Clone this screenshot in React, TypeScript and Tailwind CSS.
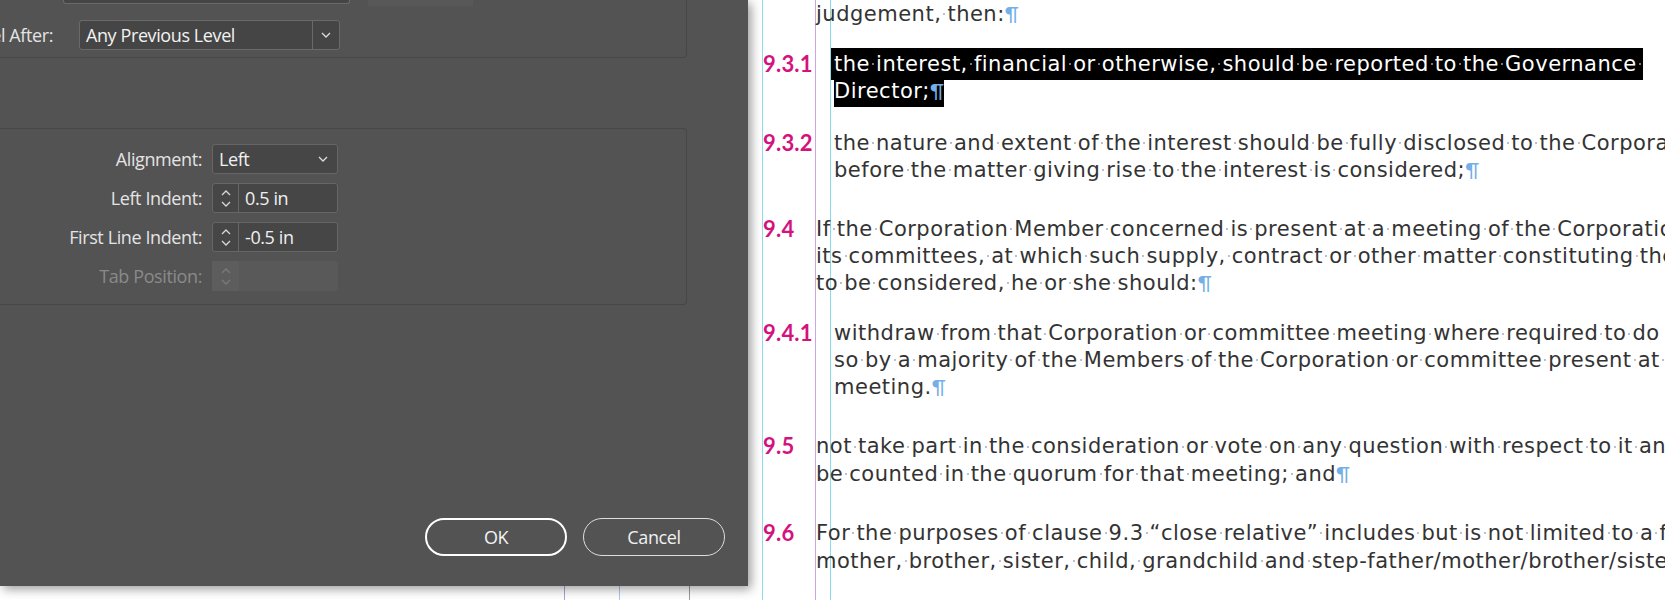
import React from "react";

function Chevron({ up = false, color = "#dcdcdc" }: { up?: boolean; color?: string }) {
  return (
    <svg width="10" height="6" viewBox="0 0 10 6" className="block">
      <polyline
        points={up ? "1,5 5,1 9,5" : "1,1 5,5 9,1"}
        fill="none"
        stroke={color}
        strokeWidth="1.3"
      />
    </svg>
  );
}

function Spinner({ value, disabled = false }: { value?: string; disabled?: boolean }) {
  const c = disabled ? "#7a7a7a" : "#d8d8d8";
  return (
    <div
      className={
        disabled
          ? "ml-[10px] flex h-[30px] w-[126px] rounded-[3px] bg-[#595959]"
          : "ml-[10px] flex h-[30px] w-[126px] rounded-[3px] border border-[#666666] bg-[#464646]"
      }
    >
      <div
        className={
          disabled
            ? "flex w-[27px] flex-col items-center justify-center gap-[5px] bg-[#5d5d5d]"
            : "flex w-[26px] flex-col items-center justify-center gap-[5px] border-r border-[#666666]"
        }
      >
        <Chevron up color={c} />
        <Chevron color={c} />
      </div>
      {value && <div className="flex items-center pl-[6px] text-[#f0f0f0]">{value}</div>}
    </div>
  );
}

// InDesign shows spaces as small dots
function Dot({ light = false }: { light?: boolean }) {
  return (
    <span className="inline-block h-[2px] w-[0.29em] align-[0.27em]">
      <span
        className={
          light
            ? "mx-auto block size-[2px] rounded-full bg-[#a0a0a0]"
            : "mx-auto block size-[2px] rounded-full bg-[#a3abc6]"
        }
      />
    </span>
  );
}

function Words({ text, light = false }: { text: string; light?: boolean }) {
  const parts = text.split(" ");
  return (
    <>
      {parts.map((w, i) => (
        <React.Fragment key={i}>
          {i > 0 && <Dot light={light} />}
          {w}
        </React.Fragment>
      ))}
    </>
  );
}

const Pilcrow = () => (
  <span className="font-['Lato'] text-[20px] tracking-normal text-[#74afe6]">¶</span>
);

type ParaProps = {
  num?: string;
  lines: string[];
  sub?: boolean;
  className?: string;
};

function Num({ num, sub }: { num?: string; sub?: boolean }) {
  return (
    <div
      className={
        sub
          ? "w-[71px] shrink-0 font-['Lato'] text-[22px] font-bold tracking-[0.2px] text-[#d4127d]"
          : "w-[53px] shrink-0 font-['Lato'] text-[22px] font-bold tracking-[0.2px] text-[#d4127d]"
      }
    >
      {num}
    </div>
  );
}

function Para({ num, lines, sub = false, className = "" }: ParaProps) {
  return (
    <div className={"flex " + className}>
      <Num num={num} sub={sub} />
      <div className="whitespace-nowrap">
        {lines.map((l, i) => (
          <div key={i}>
            <Words text={l} />
            {i === lines.length - 1 && <Pilcrow />}
          </div>
        ))}
      </div>
    </div>
  );
}

export default function App() {
  return (
    <div className="flex h-[600px] w-[1665px] overflow-hidden bg-white">
      {/* dialog column */}
      <div className="flex w-[748px] shrink-0 flex-col">
        <div className="relative z-10 flex h-[586px] flex-col bg-[#535353] font-['Open_Sans',sans-serif] text-[18px] tracking-[-0.4px] text-[#e4e4e4] shadow-[3px_3px_10px_rgba(0,0,0,0.4)]">
          {/* numbering group */}
          <div className="h-[58px] w-[687px] rounded-br-[4px] border-r border-b border-[#474747]">
            <div className="flex h-[6px] items-start">
              <div className="ml-[63px] h-[4px] w-[287px] rounded-b-[3px] border-x border-b border-[#6a6a6a] bg-[#454545]" />
              <div className="ml-[18px] h-[6px] w-[105px] bg-[#585858]" />
            </div>
            <div className="mt-[14px] flex items-center">
              <div className="flex w-[53px] justify-end whitespace-nowrap">Level After:</div>
              <div className="ml-[26px] flex h-[30px] w-[261px] rounded-[3px] border border-[#6a6a6a] bg-[#454545]">
                <div className="flex flex-1 items-center pl-[6px] text-[#f2f2f2]">
                  Any Previous Level
                </div>
                <div className="flex w-[27px] items-center justify-center border-l border-[#6a6a6a]">
                  <Chevron />
                </div>
              </div>
            </div>
          </div>

          {/* bullet position group */}
          <div className="mt-[70px] h-[177px] w-[687px] rounded-r-[4px] border-y border-r border-[#474747]">
            <div className="flex flex-col gap-[9px] pt-[15px]">
              <div className="flex h-[30px] items-center">
                <div className="w-[202px] text-right">Alignment:</div>
                <div className="ml-[10px] flex h-[30px] w-[126px] items-center justify-between rounded-[3px] border border-[#666666] bg-[#464646] pr-[9px] pl-[6px] text-[#f0f0f0]">
                  <span>Left</span>
                  <Chevron />
                </div>
              </div>
              <div className="flex h-[30px] items-center">
                <div className="w-[202px] text-right">Left Indent:</div>
                <Spinner value="0.5 in" />
              </div>
              <div className="flex h-[30px] items-center">
                <div className="w-[202px] text-right">First Line Indent:</div>
                <Spinner value="-0.5 in" />
              </div>
              <div className="flex h-[30px] items-center">
                <div className="w-[202px] text-right text-[#8a8a8a]">Tab Position:</div>
                <Spinner disabled />
              </div>
            </div>
          </div>

          <div className="mt-auto flex justify-end gap-[16px] pr-[23px] pb-[30px]">
            <button className="flex h-[38px] w-[142px] items-center justify-center rounded-full border-2 border-white text-[#f4f4f4]">
              OK
            </button>
            <button className="flex h-[38px] w-[142px] items-center justify-center rounded-full border border-[#dddddd] text-[#f0f0f0]">
              Cancel
            </button>
          </div>
        </div>

        {/* page guides peeking under the dialog */}
        <div className="flex h-[14px]">
          <div className="w-[564px]" />
          <div className="w-px bg-[#a4a4e0]" />
          <div className="w-[54px]" />
          <div className="w-px bg-[#a8c8f0]" />
          <div className="w-[69px]" />
          <div className="w-px bg-[#9a9a9a]" />
        </div>
      </div>

      {/* document page */}
      <div className="relative flex-1">
        <div className="absolute top-0 left-[14px] h-full w-px bg-[#8fdcef]" />
        <div className="absolute top-0 left-[67px] h-full w-px bg-[#c8a8e4]" />
        <div className="absolute top-0 left-[82px] h-full w-px bg-[#86dcef]" />

        <div className="relative pl-[15px] font-['DejaVu_Sans',sans-serif] text-[21px] leading-[26.5px] tracking-[0.5px] text-[#333333]">
          <Para lines={["judgement, then:"]} />

          {/* selected paragraph */}
          <div className="mt-[23px] flex">
            <Num num="9.3.1" sub />
            <div className="whitespace-nowrap text-white">
              <div>
                <span className="-ml-[3px] bg-black py-[4px] pl-[3px]">
                  <Words text="the interest, financial or otherwise, should be reported to the Governance " light />
                </span>
              </div>
              <div>
                <span className="bg-black py-[4px]">
                  <Words text="Director;" light />
                  <Pilcrow />
                </span>
              </div>
            </div>
          </div>

          <Para
            className="mt-[25px]"
            num="9.3.2"
            sub
            lines={[
              "the nature and extent of the interest should be fully disclosed to the Corporation",
              "before the matter giving rise to the interest is considered;",
            ]}
          />
          <Para
            className="mt-[32.6px]"
            num="9.4"
            lines={[
              "If the Corporation Member concerned is present at a meeting of the Corporation or",
              "its committees, at which such supply, contract or other matter constituting the interest is",
              "to be considered, he or she should:",
            ]}
          />
          <Para
            className="mt-[23.8px]"
            num="9.4.1"
            sub
            lines={[
              "withdraw from that Corporation or committee meeting where required to do",
              "so by a majority of the Members of the Corporation or committee present at that",
              "meeting.",
            ]}
          />
          <Para
            className="mt-[32.4px]"
            num="9.5"
            lines={[
              "not take part in the consideration or vote on any question with respect to it and not",
              "be counted in the quorum for that meeting; and",
            ]}
          />
          <Para
            className="mt-[32.8px]"
            num="9.6"
            lines={[
              "For the purposes of clause 9.3 \u201cclose relative\u201d includes but is not limited to a father,",
              "mother, brother, sister, child, grandchild and step-father/mother/brother/sister.",
            ]}
          />
        </div>
      </div>
    </div>
  );
}
